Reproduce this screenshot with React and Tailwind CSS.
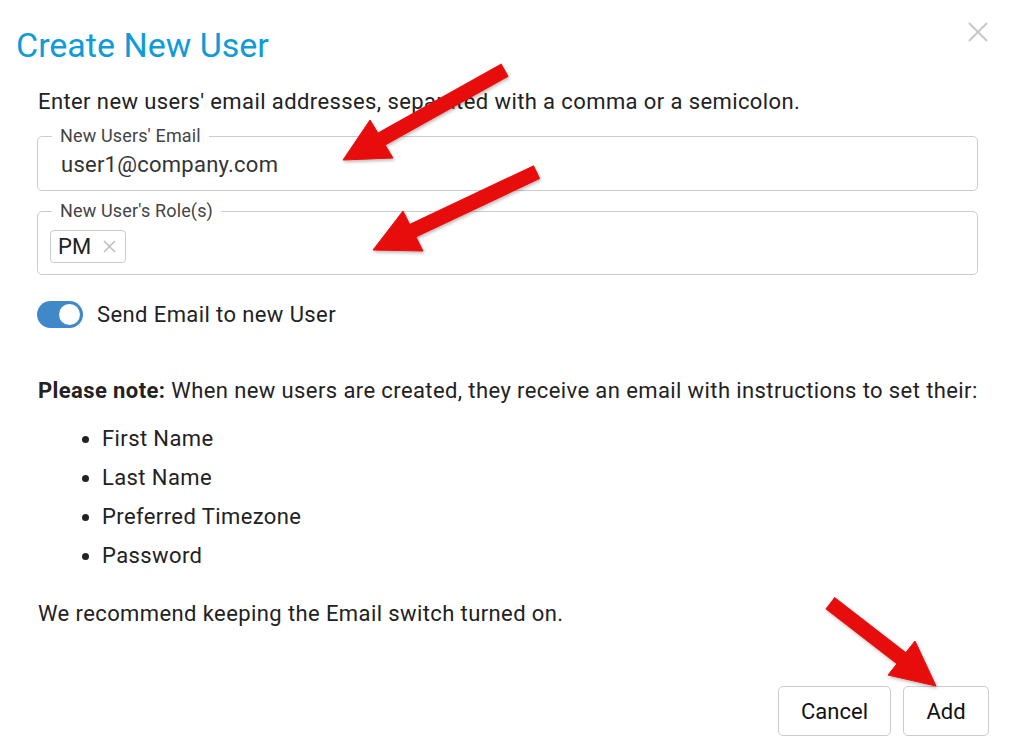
import React from "react";

const items = ["First Name", "Last Name", "Preferred Timezone", "Password"];

const Arrows = () => (
  <svg
    className="absolute inset-0 pointer-events-none"
    width="1012"
    height="754"
    viewBox="0 0 1012 754"
  >
    <defs>
      <filter id="sh" x="-20%" y="-20%" width="140%" height="140%">
        <feDropShadow dx="1" dy="2" stdDeviation="1.5" floodColor="#000" floodOpacity="0.25" />
      </filter>
    </defs>
    <g fill="#e80909" stroke="#e80909" filter="url(#sh)">
      {/* arrow 1 */}
      <line x1="505" y1="70" x2="378" y2="141" strokeWidth="15" />
      <polygon points="343,160 370,120 393,158" strokeWidth="1" />
      {/* arrow 2 */}
      <line x1="537" y1="172" x2="410" y2="232" strokeWidth="15" />
      <polygon points="373,250 403,211 423,251" strokeWidth="1" />
      {/* arrow 3 */}
      <line x1="830" y1="603" x2="905" y2="661" strokeWidth="15" />
      <polygon points="936,686 888,675 915,641" strokeWidth="1" />
    </g>
  </svg>
);

const Field = ({ label, children, className = "" }) => (
  <fieldset className={`border border-[#cccccc] rounded-[5px] ${className}`}>
    <legend className="ml-[14px] px-[8px] text-[18px] leading-[22px] tracking-[0.15px] text-[#444]">
      {label}
    </legend>
    {children}
  </fieldset>
);

export default function App() {
  return (
    <div
      className="relative w-[1012px] h-[754px] bg-white overflow-hidden text-[#222]"
      style={{ fontFamily: "Roboto, 'Noto Sans', sans-serif" }}
    >
      {/* CLOSE */}
      <button className="absolute top-[22px] right-[24px] w-[20px] h-[20px]">
        <svg width="20" height="20" viewBox="0 0 20 20">
          <path d="M1 1 L19 19 M19 1 L1 19" stroke="#c8c8c8" strokeWidth="2" />
        </svg>
      </button>

      {/* HEADER */}
      <h1 className="pl-[16px] pt-[25px] text-[34px] leading-[40px] text-[#0f9bd7]">
        Create New User
      </h1>

      <div className="px-[37px] tracking-[0.4px]">
        <p className="mt-[24px] pl-[1px] text-[22px] leading-[26px]">
          Enter new users' email addresses, separated with a comma or a semicolon.
        </p>

        {/* EMAIL */}
        <Field label="New Users' Email" className="mt-[10px] mr-[-3px]">
          <div className="px-[23px] pt-[5px] pb-[12px] text-[22px] leading-[26px] tracking-[0.25px] text-[#333]">
            user1@company.com
          </div>
        </Field>

        {/* ROLES */}
        <Field label="New User's Role(s)" className="mt-[9px] mr-[-3px]">
          <div className="pl-[12px] pt-[8px] pb-[11px] flex">
            <span className="flex items-center h-[33px] pl-[7px] pr-[9px] gap-[12px] border border-[#cccccc] rounded-[4px] text-[22px] tracking-normal">
              PM
              <svg width="13" height="13" viewBox="0 0 13 13">
                <path d="M1 1 L12 12 M12 1 L1 12" stroke="#bdbdbd" strokeWidth="1.5" />
              </svg>
            </span>
          </div>
        </Field>

        {/* TOGGLE */}
        <div className="mt-[26px] flex items-center gap-[14px]">
          <div className="w-[46px] h-[27px] rounded-full bg-[#3f89c9] flex items-center justify-end pr-[3px]">
            <div className="w-[21px] h-[21px] rounded-full bg-white" />
          </div>
          <span className="text-[22px] leading-[26px]">Send Email to new User</span>
        </div>

        {/* NOTE */}
        <p className="mt-[50px] pl-[1px] text-[22px] leading-[26px] whitespace-nowrap">
          <b className="font-bold">Please note:</b> When new users are created, they receive an email with instructions to set their:
        </p>

        <ul className="mt-[15px] pl-[65px] list-disc text-[22px] leading-[39px]">
          {items.map((it) => (
            <li key={it}>{it}</li>
          ))}
        </ul>

        <p className="mt-[26px] pl-[1px] text-[22px] leading-[26px]">
          We recommend keeping the Email switch turned on.
        </p>
      </div>

      {/* FOOTER */}
      <div className="mt-[59px] pr-[23px] flex justify-end gap-[12px]">
        <button className="w-[113px] h-[50px] border border-[#cccccc] rounded-[5px] text-[22px] text-[#111]">
          Cancel
        </button>
        <button className="w-[86px] h-[50px] border border-[#cccccc] rounded-[5px] text-[22px] text-[#111]">
          Add
        </button>
      </div>

      <Arrows />
    </div>
  );
}
